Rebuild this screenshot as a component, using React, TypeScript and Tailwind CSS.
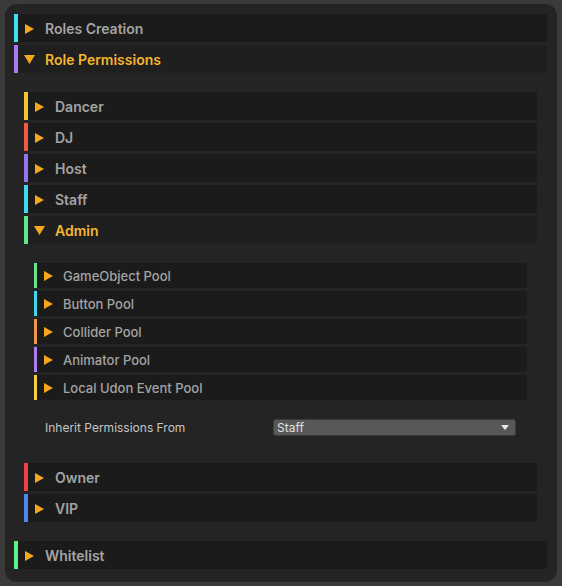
import React from "react";

type Item = { label: string; color: string };

const font = { fontFamily: "Inter, 'Noto Sans', 'Liberation Sans', sans-serif" };

function Arrow({ open }: { open?: boolean }) {
  if (open)
    return (
      <svg width="11" height="9" viewBox="0 0 11 9" className="shrink-0">
        <path d="M0 0 L11 0 L5.5 9 Z" fill="#f4a81d" />
      </svg>
    );
  return (
    <svg width="9" height="10" viewBox="0 0 9 10" className="shrink-0">
      <path d="M0 0 L9 5 L0 10 Z" fill="#f4a81d" />
    </svg>
  );
}

function Header({ item, open, pool }: { item: Item; open?: boolean; pool?: boolean }) {
  return (
    <div
      className={`flex items-center ${pool ? "h-[25px]" : "h-[28px]"} ${
        open ? "bg-[#1f1f1f]" : "bg-[#1b1b1b]"
      }`}
    >
      <div className={`h-full shrink-0 ${pool ? "w-[3px]" : "w-[4px]"}`} style={{ background: item.color }} />
      <div
        className={`flex items-center shrink-0 pt-[1px] ${
          pool ? "pl-[7px] w-[26px]" : open ? "pl-[6px] w-[27px]" : "pl-[7px] w-[27px]"
        }`}
      >
        <Arrow open={open} />
      </div>
      <span
        className={`pt-[2px] leading-none ${pool ? "text-[13px] font-medium" : "text-[14px] font-semibold"} ${
          open ? "text-[#f5b52e]" : "text-[#a3a3a3]"
        }`}
      >
        {item.label}
      </span>
    </div>
  );
}

const roles: Item[] = [
  { label: "Dancer", color: "#f5c23a" },
  { label: "DJ", color: "#ee5b42" },
  { label: "Host", color: "#9673f3" },
  { label: "Staff", color: "#3fd9f0" },
];

const pools: Item[] = [
  { label: "GameObject Pool", color: "#6fe08c" },
  { label: "Button Pool", color: "#43d4ee" },
  { label: "Collider Pool", color: "#ef9448" },
  { label: "Animator Pool", color: "#ae7ef0" },
  { label: "Local Udon Event Pool", color: "#f2cf48" },
];

const lower: Item[] = [
  { label: "Owner", color: "#ee4343" },
  { label: "VIP", color: "#4c87f0" },
];

export default function App() {
  return (
    <div className="w-[562px] h-[586px] bg-[#3a3a3a] pt-[4px] px-[5px] pb-[4px]" style={font}>
      <div className="h-full rounded-[12px] bg-[#242424] pt-[10px] pl-[9px] pr-[10px] flex flex-col gap-[3px]">
        <Header item={{ label: "Roles Creation", color: "#3fe2f0" }} />
        <div className="flex flex-col">
          <Header item={{ label: "Role Permissions", color: "#a77cf0" }} open />
          <div className="pt-[19px] pb-[16px] px-[10px] flex flex-col gap-[3px]">
            {roles.map((r) => (
              <Header key={r.label} item={r} />
            ))}
            <div className="flex flex-col">
              <Header item={{ label: "Admin", color: "#5de88a" }} open />
              <div className="pt-[19px] pb-[24px] px-[10px] flex flex-col">
                <div className="flex flex-col gap-[3px]">
                  {pools.map((p) => (
                    <Header key={p.label} item={p} pool />
                  ))}
                </div>
                <div className="mt-[19px] flex items-center h-[17px]">
                  <span className="pl-[11px] w-[239px] pt-[1px] text-[12px] text-[#c4c4c4] leading-none">
                    Inherit Permissions From
                  </span>
                  <div className="flex-1 mr-[11px] h-[17px] rounded-[3px] bg-[#585858] border border-[#3c3c3c] flex items-center justify-between pl-[3px] pr-[6px]">
                    <span className="text-[12px] text-[#e2e2e2] leading-none">Staff</span>
                    <svg width="8" height="5" viewBox="0 0 8 5">
                      <path d="M0 0 L8 0 L4 5 Z" fill="#e8e8e8" />
                    </svg>
                  </div>
                </div>
              </div>
            </div>
            {lower.map((r) => (
              <Header key={r.label} item={r} />
            ))}
          </div>
        </div>
        <Header item={{ label: "Whitelist", color: "#5ef08a" }} />
      </div>
    </div>
  );
}
